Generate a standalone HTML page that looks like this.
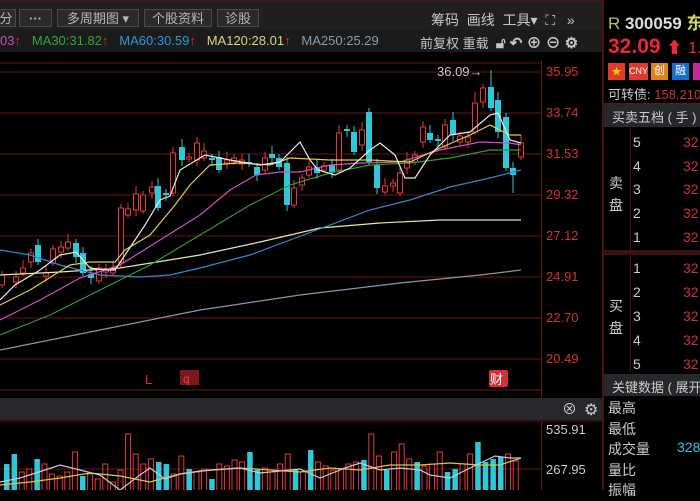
<!DOCTYPE html>
<html><head><meta charset="utf-8"><style>
body{margin:0;width:700px;height:490px;overflow:hidden;background:#000;font-family:"Liberation Sans","Noto Sans CJK SC",sans-serif;position:relative}
.a{position:absolute;white-space:nowrap}
.btn{position:absolute;top:9px;height:18px;border:1px solid #4a4a4a;background:#2a2a2a;color:#b8b8b8;font-size:13px;line-height:18px;text-align:center;box-sizing:border-box}
.r{color:#e0282e;font-weight:bold}
.lbl{position:absolute;left:546px;font-size:13px;color:#d4303a}
.rp{position:absolute;font-size:14px;color:#ccc}
</style></head><body>
<div class="a" style="left:0;top:0;width:603px;height:30px;background:#1f1f1f;border-top:2px solid #3a1a1a;box-sizing:border-box"></div>
<div class="btn" style="left:-4px;width:20px">分</div>
<div class="btn" style="left:19px;width:33px;font-weight:bold">···</div>
<div class="btn" style="left:57px;width:82px">多周期图 ▾</div>
<div class="btn" style="left:144px;width:68px">个股资料</div>
<div class="btn" style="left:217px;width:42px">诊股</div>
<div class="a" style="left:431px;top:10px;font-size:14px;color:#c8c8c8">筹码 &nbsp;画线 &nbsp;工具▾ &nbsp;⛶ &nbsp;&nbsp;»</div>
<div class="a" style="left:0;top:30px;width:603px;height:22px;background:#1b1b1b"></div>
<div class="a" style="left:0;top:33px;font-size:13px"><span style="color:#d04ac8">03</span><span class="r">↑</span> &nbsp; <span style="color:#2eaa3a">MA30:31.82</span><span class="r">↑</span> &nbsp; <span style="color:#2a9ad8">MA60:30.59</span><span class="r">↑</span> &nbsp; <span style="color:#d8d870">MA120:28.01</span><span class="r">↑</span> &nbsp; <span style="color:#8a9ab0">MA250:25.29</span></div>
<div class="a" style="left:420px;top:32px;font-size:13px;color:#c8c8c8">前复权 重载 &nbsp;<span style="font-size:15px;font-weight:bold">🔓︎ ↶ ⊕ ⊖ ⚙</span></div>

<svg class="a" style="left:0;top:0" width="603" height="490" id="sv">
<g stroke="#6a1414" stroke-width="1">
<line x1="0" y1="72" x2="541" y2="72"/><line x1="0" y1="113" x2="541" y2="113"/><line x1="0" y1="154" x2="541" y2="154"/><line x1="0" y1="195" x2="541" y2="195"/><line x1="0" y1="236" x2="541" y2="236"/><line x1="0" y1="277" x2="541" y2="277"/><line x1="0" y1="318" x2="541" y2="318"/><line x1="0" y1="359" x2="541" y2="359"/><line x1="0" y1="390" x2="541" y2="390"/>
<line x1="541.5" y1="60" x2="541.5" y2="398"/><line x1="0" y1="63" x2="541" y2="63"/>
<line x1="0" y1="421" x2="603" y2="421"/><line x1="0" y1="469" x2="541" y2="469"/><line x1="541.5" y1="421" x2="541.5" y2="490"/>
</g>
<rect x="0" y="398" width="603" height="22" fill="#26282b"/>
<g id="cd"></g>
<g fill="none" stroke-width="1.2">
<polyline stroke="#8a94a8" points="0,350 100,330 200,310 300,295 400,283 480,275 521,270"/>
<polyline stroke="#e8e8a8" points="0,275 60,272 120,268 200,255 260,242 320,228 380,223 440,220 521,220"/>
<polyline stroke="#2a8ad0" points="0,250 30,255 60,265 100,275 140,277 170,275 200,268 250,255 290,240 330,225 370,210 410,200 450,187 490,178 521,170"/>
<polyline stroke="#2e9a3a" points="0,335 50,315 100,290 150,265 200,235 250,205 290,185 330,173 370,165 410,163 450,158 490,150 521,150"/>
<polyline stroke="#d050c8" points="0,320 40,300 80,278 120,265 160,240 200,215 230,190 256,175 280,172 300,172 330,165 360,163 400,162 440,150 480,142 510,143 521,145"/>
<polyline stroke="#e0d040" points="0,305 30,290 70,265 90,262 115,262 125,250 150,235 175,205 190,185 210,165 240,163 270,165 290,158 330,160 370,160 410,162 440,148 470,135 490,125 510,135 521,135"/>
<polyline stroke="#e8e8e8" points="0,300 15,285 40,270 60,255 76,252 90,268 105,270 115,270 125,255 145,225 160,200 170,196 180,170 205,155 230,160 260,165 280,162 300,142 310,160 318,170 335,175 350,168 370,150 380,143 395,155 405,178 415,178 430,155 450,135 470,132 490,115 498,113 510,140 521,143"/>
</g>
<text x="437" y="76" fill="#c8c8c8" font-size="13" font-family="Liberation Sans">36.09→</text>
<text x="145" y="384" fill="#e0282e" font-size="13">L</text>
<rect x="180" y="370" width="19" height="15" fill="#7a1a1a"/><text x="183" y="383" fill="#e04040" font-size="12">q</text>
<rect x="489" y="370" width="19" height="17" fill="#d03038" rx="2"/><text x="490" y="384" fill="#fff" font-size="13" font-family="Noto Sans CJK SC">财</text>
<text x="562" y="414" fill="#ccc" font-size="15">⊗</text><text x="584" y="415" fill="#ccc" font-size="16">⚙</text>
<g id="vb"></g>
<g fill="none" stroke-width="1.2">
<polyline stroke="#d8c840" points="0,485 30,482 60,478 90,473 120,476 150,482 180,474 210,470 240,468 270,470 300,472 330,468 360,470 390,465 420,465 450,463 480,465 500,465 521,458"/>
<polyline stroke="#c8c8d8" points="0,482 20,478 45,470 60,465 80,470 100,475 120,490 140,475 150,468 165,479 180,474 200,471 240,468 260,473 300,469 320,478 345,468 360,463 380,470 400,468 420,470 430,475 450,478 470,468 495,456 510,458 521,458"/>
</g>
<text x="546" y="434" fill="#ccc" font-size="13">535.91</text>
<text x="546" y="474" fill="#ccc" font-size="13">267.95</text>
</svg>
<div class="lbl" style="top:64px">35.95</div><div class="lbl" style="top:105px">33.74</div><div class="lbl" style="top:146px">31.53</div><div class="lbl" style="top:187px">29.32</div><div class="lbl" style="top:228px">27.12</div><div class="lbl" style="top:269px">24.91</div><div class="lbl" style="top:310px">22.70</div><div class="lbl" style="top:351px">20.49</div>

<div class="a" style="left:602px;top:0;width:98px;height:490px;background:#000;border-left:2px solid #4a1414"></div>
<div class="a" style="left:608px;top:9px;font-size:17px;color:#ddd;font-weight:bold"><span style="color:#bcbc70;font-weight:normal">R</span> 300059 <span style="color:#d8d860">东</span></div>
<div class="a" style="left:608px;top:34px;font-size:21px;color:#e8283a;font-weight:bold">32.09 <span style="font-size:16px">⬆</span> <span style="font-size:16px;font-weight:normal">1.</span></div>
<div class="a" style="left:608px;top:63px;width:17px;height:17px;background:#e03a2a;color:#f0d000;font-size:10px;text-align:center">★</div>
<div class="a" style="left:629px;top:63px;width:19px;height:17px;background:#e03a2a;color:#fff;font-size:9px;line-height:17px;text-align:center">CNY</div>
<div class="a" style="left:651px;top:63px;width:17px;height:17px;background:#e08020;color:#fff;font-size:11px;line-height:17px;text-align:center">创</div>
<div class="a" style="left:672px;top:63px;width:17px;height:17px;background:#1a6ad0;color:#fff;font-size:11px;line-height:17px;text-align:center">融</div>
<div class="a" style="left:693px;top:63px;width:10px;height:17px;background:#c02a9a"></div>
<div class="a" style="left:608px;top:84px;font-size:13px;color:#ccc">可转债: <span style="color:#d03040">158.210</span></div>
<div class="a" style="left:604px;top:103px;width:96px;height:23px;background:#26282b;border-top:1px solid #5a1a1a"></div>
<div class="a" style="left:612px;top:107px;font-size:13px;color:#ccc">买卖五档 ( 手 )</div>
<div class="a" style="left:630px;top:127px;width:1px;height:245px;background:#4a1414"></div>
<div class="a" style="left:604px;top:250px;width:96px;height:5px;background:#3a1010"></div>
<div class="rp" style="left:609px;top:172px;line-height:22px">卖<br>盘</div>
<div class="rp" style="left:609px;top:295px;line-height:22px">买<br>盘</div>
<div class="rp" style="left:633px;top:131px;line-height:23.7px">5<br>4<br>3<br>2<br>1</div>
<div class="rp" style="left:683px;top:131px;line-height:23.7px;color:#d03040">32<br>32<br>32<br>32<br>32</div>
<div class="rp" style="left:633px;top:256px;line-height:24px">1<br>2<br>3<br>4<br>5</div>
<div class="rp" style="left:683px;top:256px;line-height:24px;color:#d03040">32<br>32<br>32<br>32<br>32</div>
<div class="a" style="left:604px;top:374px;width:96px;height:22px;background:#26282b"></div>
<div class="a" style="left:612px;top:377px;font-size:13px;color:#ccc">关键数据 ( 展开</div>
<div class="rp" style="left:608px;top:398px;line-height:20.5px">最高<br>最低<br>成交量<br>量比<br>振幅</div>
<div class="rp" style="left:677px;top:439px;color:#30c8d8">328</div>
<script>
var c=[[2,275,285,1],[16,277,282,1],[23,268,273,1],[31,253,262,1],[38,245,262,0],[46,273,276,1],[53,249,263,1],[61,247,252,1],[68,242,248,1],[76,243,257,0],[83,253,273,0],[91,274,278,0],[99,268,281,1],[106,270,272,1],[113,269,273,1],[121,208,262,1],[128,209,215,1],[136,194,210,1],[143,195,211,1],[152,187,193,1],[158,186,208,0],[166,193,195,0],[173,153,193,1],[182,147,160,0],[189,157,159,1],[197,143,160,1],[204,151,158,1],[212,158,160,0],[219,157,170,0],[227,160,163,1],[234,158,162,1],[242,160,164,1],[249,162,164,0],[257,167,175,0],[265,158,170,1],[272,154,158,0],[279,158,167,0],[287,163,205,0],[294,188,205,1],[302,178,185,1],[309,167,175,1],[317,167,173,0],[324,166,170,1],[332,165,172,0],[339,133,170,1],[347,129,131,0],[354,132,152,0],[362,130,145,1],[369,112,162,0],[377,165,188,0],[385,186,192,1],[393,183,186,1],[400,173,193,1],[407,160,168,1],[415,155,162,1],[423,127,142,1],[430,133,140,0],[438,139,141,0],[445,125,147,1],[453,120,135,0],[460,136,142,1],[468,137,142,1],[475,103,132,1],[483,88,102,1],[491,87,108,0],[498,100,132,0],[506,117,168,0],[513,168,175,0],[521,143,157,1]];
var s='';c.forEach(function(k,i){var col=k[3]?'#e8383a':'#30c8d8';var t=k[1]-4-(i%3)*2,b=k[2]+3+(i%2)*3;if(i==64)t=70;if(i==67)b=193;if(i==62)t=92;
s+='<line x1="'+k[0]+'" y1="'+t+'" x2="'+k[0]+'" y2="'+b+'" stroke="'+col+'"/>';
var h=Math.max(k[2]-k[1],1);s+=k[3]?'<rect x="'+(k[0]-2.5)+'" y="'+k[1]+'" width="5" height="'+h+'" fill="#000" stroke="'+col+'"/>':'<rect x="'+(k[0]-3)+'" y="'+k[1]+'" width="6" height="'+h+'" fill="'+col+'"/>';});
document.getElementById('cd').innerHTML=s;
var v='';var hs=[470,460,478,475,465,470,480,482,478,458,482,480,485,470,488,476,440,460,470,465,468,470,480,462,475,478,475,485,470,472,466,468,458,475,474,478,470,460,475,478,456,468,472,476,475,470,468,466,440,462,476,458,450,465,468,472,470,458,478,475,470,460,448,468,465,463,460,467];
for(var i=0;i<hs.length;i++){var x=4+i*7.6;var y=hs[i]-6;var red=[0,0,1,1,0,1,1,1,1,1,0,1,1,1,1,1,1,1,1,1,0,0,1,1,0,1,1,0,1,1,1,1,0,0,1,1,1,1,0,1,0,1,1,1,1,1,1,0,1,1,0,1,1,1,0,1,1,1,0,0,1,1,0,0,0,0,1,1][i];var col=red?'#e8383a':'#30c8d8';
v+=red?'<rect x="'+x+'" y="'+y+'" width="5" height="'+(492-y)+'" fill="none" stroke="'+col+'"/>':'<rect x="'+x+'" y="'+y+'" width="5.5" height="'+(492-y)+'" fill="'+col+'"/>';}
document.getElementById('vb').innerHTML=v;
</script>
</body></html>
